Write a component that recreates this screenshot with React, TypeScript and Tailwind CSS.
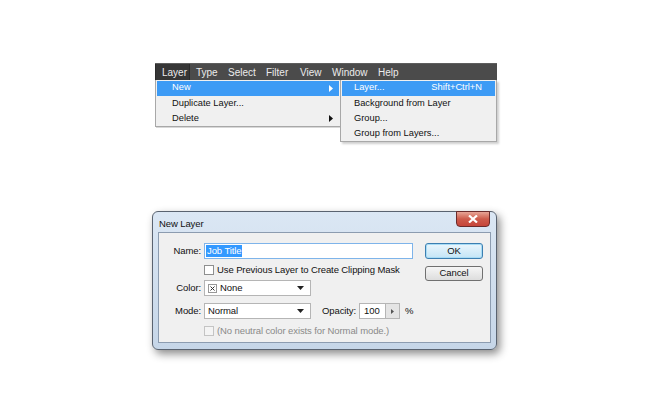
import React from 'react';

const font = { fontFamily: '"Liberation Sans", Arial, sans-serif' };

function MenuItem({ label, shortcut, arrow, active, pl }: { label: string; shortcut?: string; arrow?: boolean; active?: boolean; pl: string }) {
  return (
    <div
      className={`h-[15px] mx-[1px] flex items-center ${pl} pr-[6px] ${active ? 'bg-[#3d9bf5] text-white' : 'text-[#111]'}`}
    >
      <span className="flex-1">{label}</span>
      {shortcut && <span className="mr-[7px]">{shortcut}</span>}
      {arrow && (
        <svg width="4" height="7" viewBox="0 0 4 7">
          <path d="M0 0 L4 3.5 L0 7 Z" fill={active ? '#fff' : '#111'} />
        </svg>
      )}
    </div>
  );
}

function Select({ children, width }: { children: React.ReactNode; width: string }) {
  return (
    <div className={`${width} h-[16px] bg-white border border-[#b5b5b5] flex items-center pl-[3px] pr-[6px]`}>
      <div className="flex-1 flex items-center">{children}</div>
      <svg width="7" height="4" viewBox="0 0 7 4">
        <path d="M0 0 L7 0 L3.5 4 Z" fill="#222" />
      </svg>
    </div>
  );
}

export default function App() {
  return (
    <div className="w-[650px] h-[411px] bg-white overflow-hidden" style={font}>
      {/* Menu */}
      <div className="pt-[63px] pl-[155px]">
        <div className="w-[342px] h-[17px] bg-[#4b4b4b] border-t border-[#5e5e5e] flex items-center text-[#ececec] text-[10px]">
          <div className="h-full w-[35px] pl-[6px] flex items-center bg-[#363636] border-x border-[#2a2a2a]">Layer</div>
          <div className="pl-[6px] w-[38px]">Type</div>
          <div className="w-[38px]">Select</div>
          <div className="w-[34px]">Filter</div>
          <div className="w-[32px]">View</div>
          <div className="w-[46px]">Window</div>
          <div>Help</div>
        </div>
        <div className="flex items-start text-[9.3px]">
          <div className="w-[185px] h-[47px] bg-[#f0f0f0] border-l border-b border-[#a8a8a8] pt-[1px] shadow-[1px_1px_0_#d8d8d8] flex flex-col">
            <MenuItem label="New" arrow active pl="pl-[15px]" />
            <div className="h-[1px]" />
            <MenuItem label="Duplicate Layer..." pl="pl-[15px]" />
            <MenuItem label="Delete" arrow pl="pl-[15px]" />
          </div>
          <div className="w-[157px] h-[62px] bg-[#f0f0f0] border border-t-0 border-[#a8a8a8] pt-[1px] shadow-[2px_2px_2px_#cfcfcf] flex flex-col">
            <MenuItem label="Layer..." shortcut="Shift+Ctrl+N" active pl="pl-[12px]" />
            <div className="h-[1px]" />
            <MenuItem label="Background from Layer" pl="pl-[12px]" />
            <MenuItem label="Group..." pl="pl-[12px]" />
            <MenuItem label="Group from Layers..." pl="pl-[12px]" />
          </div>
        </div>
      </div>

      {/* Dialog */}
      <div className="mt-[69px] ml-[152px] w-[345px] h-[139px] rounded-[6px] border border-[#5a6370] bg-gradient-to-b from-[#dbe7f4] to-[#c6d6e8] shadow-[3px_4px_8px_rgba(0,0,0,0.45)] flex flex-col px-[5px] pb-[6px] text-[9.5px] tracking-[-0.1px]">
        <div className="h-[20px] flex items-start">
          <div className="pt-[5px] pl-[1px] text-[#111] flex-1">New Layer</div>
          <div className="w-[34px] h-[16px] mr-[1px] -mt-[1px] rounded-b-[4px] border border-[#6b2b2b] bg-gradient-to-b from-[#e7a597] via-[#cd5b4b] to-[#c6453a] flex items-center justify-center">
            <svg width="10" height="8" viewBox="0 0 10 8">
              <path d="M1 0.5 L9 7.5 M9 0.5 L1 7.5" stroke="#fff" strokeWidth="2.2" />
            </svg>
          </div>
        </div>
        <div className="flex-1 bg-[#f0f0f0] border border-[#8c9cb0] flex pt-[10px] text-[#111]">
          <div className="w-[263px] flex flex-col">
            <div className="h-[16px] flex items-center">
              <div className="w-[43px] text-right pr-[1px]">Name:</div>
              <div className="ml-[2px] w-[209px] h-[16px] bg-white border border-[#7eb4ea] flex items-center pl-[1px]">
                <span className="bg-[#3399ff] text-white px-[1px] leading-[12px]">Job Title</span>
              </div>
            </div>
            <div className="h-[10px] mt-[6px] flex items-center pl-[45px]">
              <div className="w-[10px] h-[10px] bg-white border border-[#8e8f8f]" />
              <span className="ml-[3px]">Use Previous Layer to Create Clipping Mask</span>
            </div>
            <div className="h-[16px] mt-[5px] flex items-center">
              <div className="w-[43px] text-right pr-[1px]">Color:</div>
              <div className="ml-[2px]">
                <Select width="w-[107px]">
                  <span className="w-[9px] h-[9px] border border-[#999] flex items-center justify-center mr-[3px]">
                    <svg width="5" height="5" viewBox="0 0 5 5">
                      <path d="M0.5 0.5 L4.5 4.5 M4.5 0.5 L0.5 4.5" stroke="#333" strokeWidth="1" />
                    </svg>
                  </span>
                  None
                </Select>
              </div>
            </div>
            <div className="h-[16px] mt-[7px] flex items-center">
              <div className="w-[43px] text-right pr-[1px]">Mode:</div>
              <div className="ml-[2px]">
                <Select width="w-[107px]">Normal</Select>
              </div>
              <div className="ml-[11px]">Opacity:</div>
              <div className="ml-[3px] w-[27px] h-[16px] bg-white border border-[#b5b5b5] flex items-center pl-[4px]">100</div>
              <div className="w-[14px] h-[16px] bg-[#e4e4e4] border border-l-0 border-[#b5b5b5] flex items-center justify-center">
                <svg width="3" height="5" viewBox="0 0 3 5">
                  <path d="M0 0 L3 2.5 L0 5 Z" fill="#555" />
                </svg>
              </div>
              <div className="ml-[5px]">%</div>
            </div>
            <div className="h-[10px] mt-[7px] flex items-center pl-[45px] text-[#8a8a8a]">
              <div className="w-[10px] h-[10px] bg-[#f4f4f4] border border-[#c4c4c4]" />
              <span className="ml-[3px]">(No neutral color exists for Normal mode.)</span>
            </div>
          </div>
          <div className="flex flex-col pl-[3px]">
            <div className="w-[58px] h-[16px] rounded-[3px] border border-[#3c7fb1] bg-gradient-to-b from-[#eaf6fd] to-[#c4e5f6] shadow-[inset_0_0_0_1px_#a8dcf5] flex items-center justify-center">OK</div>
            <div className="mt-[7px] w-[58px] h-[15px] rounded-[3px] border border-[#707070] bg-gradient-to-b from-[#f6f6f6] to-[#dddddd] flex items-center justify-center">Cancel</div>
          </div>
        </div>
      </div>
    </div>
  );
}
